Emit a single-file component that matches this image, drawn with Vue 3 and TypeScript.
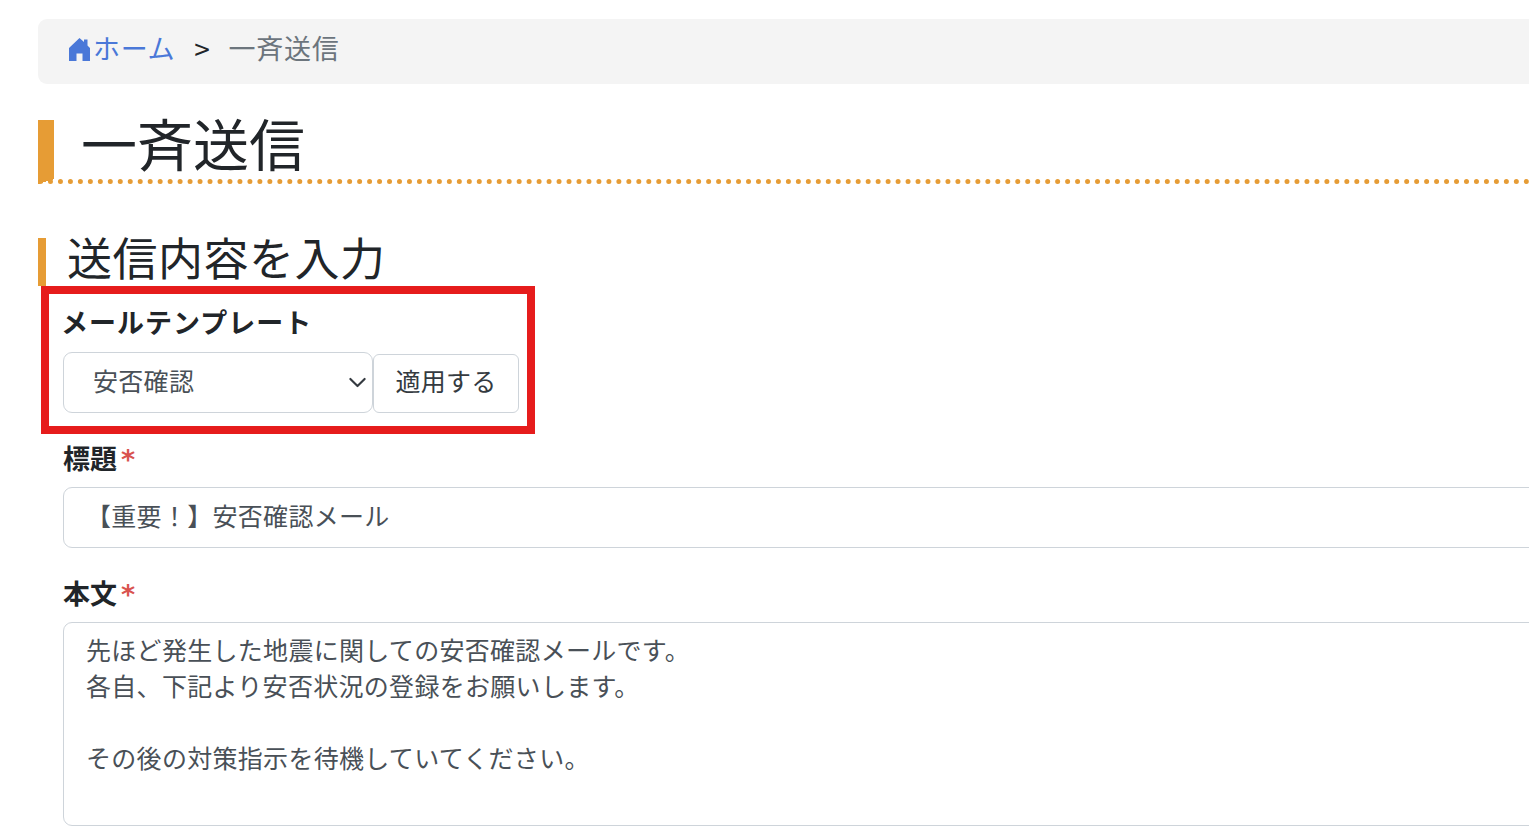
<script setup lang="ts">
const subject: string = '【重要！】安否確認メール'
const body: string = '先ほど発生した地震に関しての安否確認メールです。\n各自、下記より安否状況の登録をお願いします。\n\nその後の対策指示を待機していてください。'
</script>

<template>
  <div class="page">
    <nav class="crumb">
      <svg class="home" viewBox="0 0 21 23" aria-hidden="true">
        <path d="M10.5 0 15 4V1.5h3.5v6L21 10v13h-7.5v-7.5h-6V23H0V10Z" />
      </svg>
      <a class="crumb-link">ホーム</a>
      <span class="crumb-sep">&gt;</span>
      <span class="crumb-current">一斉送信</span>
    </nav>

    <h1 class="title">一斉送信</h1>
    <h2 class="subtitle">送信内容を入力</h2>

    <form class="form" @submit.prevent>
      <div class="group template-group">
        <label class="label">メールテンプレート</label>
        <div class="template-row">
          <div class="select-wrap">
            <select class="control select">
              <option>安否確認</option>
            </select>
            <svg class="chevron" viewBox="0 0 16 16" aria-hidden="true">
              <path d="M2 5l6 6 6-6" fill="none" stroke="#343a40" stroke-width="1.8" stroke-linecap="round" stroke-linejoin="round" />
            </svg>
          </div>
          <button class="apply" type="button">適用する</button>
        </div>
      </div>

      <div class="group subject-group">
        <label class="label short">標題<span class="req">*</span></label>
        <input class="control text" type="text" :value="subject" />
      </div>

      <div class="group body-group">
        <label class="label short">本文<span class="req">*</span></label>
        <textarea class="control area" :value="body"></textarea>
      </div>
    </form>

    <div class="highlight"></div>
  </div>
</template>

<style>
html, body { margin: 0; overflow: hidden; background: #fff; }
</style>

<style scoped>
.page {
  position: relative;
  width: 1700px;
  height: 829px;
  overflow: hidden;
  box-sizing: border-box;
  padding: 19px 0 0 38px;
  font-family: "Noto Sans CJK JP", "Noto Sans", sans-serif;
  color: #212529;
}
.crumb {
  height: 65px;
  box-sizing: border-box;
  background: #f4f4f4;
  border-radius: 9px;
  padding: 0 0 8px 31px;
  display: flex;
  align-items: center;
  font-size: 27px;
  letter-spacing: 0.7px;
}
.home { width: 21px; height: 23px; fill: #4a78d8; flex: none; margin-top: 4px; }
.crumb-link { color: #4a78d8; line-height: 1; margin-left: 3px; }
.crumb-sep { margin-left: 19px; color: #212529; line-height: 1; font-size: 28px; }
.crumb-current { margin-left: 18px; color: #6c757d; line-height: 1; }
.title {
  margin: 36px 0 0;
  height: 64px;
  box-sizing: border-box;
  border-left: 16px solid #e69c35;
  border-bottom: 5px dotted #e69c35;
  padding-left: 27px;
  font-size: 56px;
  font-weight: 400;
  line-height: 44px;
}
.subtitle {
  margin: 54px 0 0;
  height: 48px;
  box-sizing: border-box;
  border-left: 8px solid #e69c35;
  padding-left: 21px;
  font-size: 45px;
  letter-spacing: 0.5px;
  font-weight: 400;
  line-height: 38px;
}
.form { padding-left: 25px; }
.group { display: flex; flex-direction: column; }
.template-group { padding-top: 19px; }
.subject-group { margin-top: 28px; }
.body-group { margin-top: 28px; }
.label {
  font-size: 27px;
  font-weight: 700;
  line-height: 34px;
  margin-bottom: 12px;
  letter-spacing: 1px;
}
.label.short { letter-spacing: 0; }
.template-group .label { margin-bottom: 13px; margin-left: -2px; }
.req {
  color: #d9534f;
  margin-left: 4px;
  font-family: "DejaVu Sans", sans-serif;
  font-size: 27px;
  line-height: 1;
  font-weight: 700;
}
.template-row { display: flex; align-items: flex-end; }
.select-wrap { position: relative; width: 310px; height: 61px; }
.control {
  box-sizing: border-box;
  border: 1.5px solid #ced4da;
  border-radius: 9px;
  background: #fff;
  color: #495057;
  font-family: inherit;
  font-size: 25px;
  letter-spacing: 0.3px;
  outline: none;
  display: block;
}
.select {
  width: 100%;
  height: 100%;
  appearance: none;
  padding: 0 50px 6px 29px;
}
.chevron {
  position: absolute;
  right: 6px;
  top: 21px;
  width: 19px;
  height: 19px;
  pointer-events: none;
}
.apply {
  width: 146px;
  height: 59px;
  box-sizing: border-box;
  border: 1.5px solid #ced4da;
  border-radius: 6px;
  background: #fff;
  color: #343a40;
  font-family: inherit;
  font-size: 25px;
  letter-spacing: 0.3px;
  padding: 0 0 7px;
}
.text {
  width: 1600px;
  height: 61px;
  padding: 0 22px 6px;
}
.area {
  width: 1600px;
  height: 204px;
  padding: 8px 22px;
  line-height: 36px;
  resize: none;
  overflow: hidden;
}
.highlight {
  position: absolute;
  left: 41px;
  top: 286px;
  width: 494px;
  height: 148px;
  box-sizing: border-box;
  border: 8px solid #e61c1c;
  pointer-events: none;
}
</style>
